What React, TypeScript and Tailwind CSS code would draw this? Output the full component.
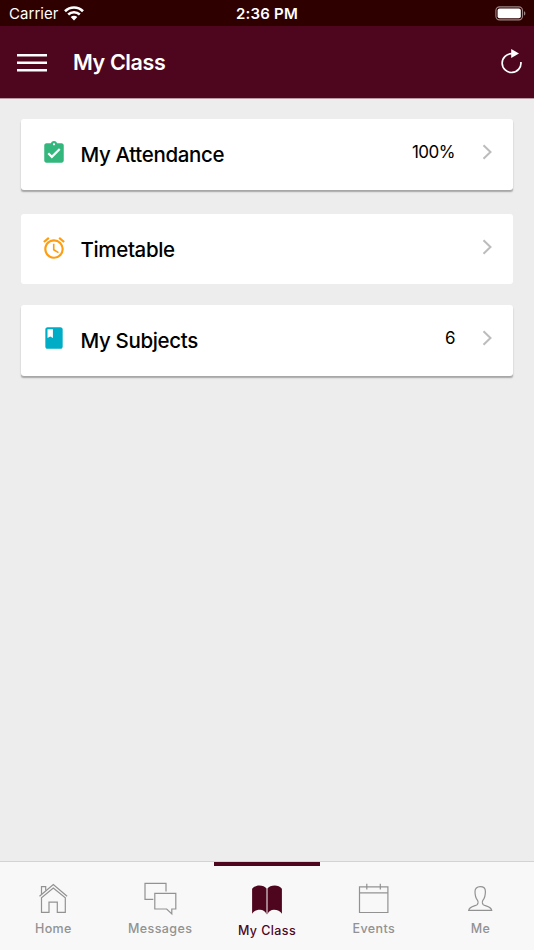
import React from 'react';
import { MdAssignmentTurnedIn, MdAccessAlarm, MdClass } from 'react-icons/md';

const cards = [
  {
    title: 'My Attendance',
    value: '100%',
    icon: <MdAssignmentTurnedIn size={26} className="mb-[3px] text-[#34b77c]" />,
    className: 'mt-[20px] h-[71px] shadow-[0_2px_1.5px_-0.5px_rgba(0,0,0,0.3)]',
  },
  {
    title: 'Timetable',
    value: '',
    icon: <MdAccessAlarm size={26} className="mb-[3px] text-[#ff9c0f]" />,
    className: 'mt-[24px] h-[70px] pt-px',
  },
  {
    title: 'My Subjects',
    value: '6',
    icon: <MdClass size={26} className="mb-[5px] text-[#00adc6]" />,
    className: 'mt-[21px] h-[71px] shadow-[0_2px_1.5px_-0.5px_rgba(0,0,0,0.3)]',
  },
];

const tabs = [
  { label: 'Home', icon: <HomeIcon />, active: false },
  { label: 'Messages', icon: <MessagesIcon />, active: false },
  { label: 'My Class', icon: <BookIcon />, active: true },
  { label: 'Events', icon: <CalendarIcon />, active: false },
  { label: 'Me', icon: <PersonIcon />, active: false },
];

function HomeIcon() {
  return (
    <svg width="36" height="36" viewBox="0 0 36 36" fill="none" stroke="currentColor" strokeWidth="1.2">
      <path d="M4.5 16.3 18.3 4.6l13.8 11.7" />
      <path d="M6.5 17.7v14.600H14V22.200h8.300v10.100h8V17.700l-12-9.700-11.800 9.700z" />
      <path d="M6.500 14.200V6.600h4.200v4" />
    </svg>
  );
}

function MessagesIcon() {
  return (
    <svg width="36" height="36" viewBox="0 0 36 36" fill="none" stroke="currentColor" strokeWidth="1.2">
      <path d="M11.300 19.300H3V3.400h21v8.200" />
      <path d="M12.800 13.300h21V29h-4v4.900L24.700 29H12.800V13.300z" />
    </svg>
  );
}

function BookIcon() {
  return (
    <svg width="36" height="36" viewBox="0 0 36 36" fill="currentColor">
      <path d="M3.100 8.800C5 6.600 7.400 5.500 10.300 5.500c3.200 0 5.800 1 7.200 2.900v26c-1.100-3.200-3.400-4.700-6.500-4.700-3.400 0-6.300 1.400-7.900 4V8.800z" />
      <path d="M32.900 8.800c-1.900-2.200-4.300-3.300-7.200-3.300-3.200 0-5.800 1-7.200 2.900v26c1.100-3.200 3.400-4.700 6.500-4.700 3.400 0 6.300 1.400 7.900 4V8.800z" />
    </svg>
  );
}

function CalendarIcon() {
  return (
    <svg width="36" height="36" viewBox="0 0 36 36" fill="none" stroke="currentColor" strokeWidth="1.2">
      <path d="M3.500 6.900h28.400v25.600H3.500z" />
      <path d="M3.500 12.900h28.400M10.800 3.800v5.800M24.300 3.800v5.800" />
    </svg>
  );
}

function PersonIcon() {
  return (
    <svg width="36" height="36" viewBox="0 0 36 36" fill="none" stroke="currentColor" strokeWidth="1.2">
      <path d="M17.200 6.600c-3.300 0-5.200 2-5.200 4.800 0 4 .7 6.600 2.400 8.700.9 1.100.8 3.400-.2 4.500-1.700 1.700-7.500 1.200-8.500 5.700h23c-1-4.500-6.800-4-8.500-5.700-1-1.100-1.100-3.400-.2-4.500 1.700-2.100 2.400-4.700 2.400-8.700 0-2.800-1.900-4.800-5.200-4.800z" />
    </svg>
  );
}

function WifiIcon() {
  return (
    <svg width="20" height="15" viewBox="0 0 20 15" fill="none" stroke="#fff" strokeWidth="2.6">
      <path d="M1 5.200c5.100-5 12.900-5 18 0" />
      <path d="M4.200 8.500c3.300-3.100 8.300-3.100 11.600 0" />
      <path d="M10 14.500 6.700 11.100c1.900-1.700 4.700-1.700 6.600 0z" fill="#fff" stroke="none" />
    </svg>
  );
}

function BatteryIcon() {
  return (
    <svg width="32" height="15" viewBox="0 0 32 15">
      <rect x="0.9" y="0.9" width="26.6" height="13" rx="3.6" fill="none" stroke="#9c8585" strokeWidth="1.1" />
      <rect x="2.6" y="2.6" width="23.2" height="9.6" rx="2" fill="#fff" />
      <path d="M29 5.200c1.800.6 1.800 3.800 0 4.400z" fill="#9c8585" />
    </svg>
  );
}

function StatusBar() {
  return (
    <div className="grid h-[26px] grid-cols-3 items-center bg-[#2e0000] text-white">
      <div className="flex items-center gap-[5px] pl-[9px]">
        <span className="pt-[3px] text-[15px] tracking-[0.05px]">Carrier</span>
        <WifiIcon />
      </div>
      <div className="pt-[3px] text-center text-[15px] font-semibold tracking-[0.2px]">2:36 PM</div>
      <div className="flex justify-end pr-[7px]">
        <BatteryIcon />
      </div>
    </div>
  );
}

function Header() {
  return (
    <header className="flex h-[73px] items-center border-b border-[#b79aa5] bg-[#4e051e] pl-[17px] pr-[11px] text-white">
      <svg width="30" height="20" viewBox="0 0 30 20" stroke="#fff" strokeWidth="2.4">
        <path d="M0 3.200h30M0 10.700h30M0 18.200h30" />
      </svg>
      <h1 className="ml-[26px] flex-1 text-[21.5px] font-semibold tracking-[-0.4px]">My Class</h1>
      <svg width="23" height="26" viewBox="0 0 23 26" fill="none">
        <path d="M12 4.700A9.400 9.400 0 1 0 20.900 13" stroke="#fff" strokeWidth="1.7" />
        <path d="M11.200 0v9l7.800-4.500z" fill="#fff" />
      </svg>
    </header>
  );
}

export default function App() {
  return (
    <div className="flex h-[950px] w-[534px] flex-col overflow-hidden bg-[#ededed] font-['Inter','Liberation_Sans',sans-serif] [font-variant-ligatures:none]">
      <StatusBar />
      <Header />
      <main className="flex-1 px-[21px]">
        {cards.map((card) => (
          <div key={card.title} className={`flex items-center rounded-[3px] bg-white px-[20px] ${card.className}`}>
            {card.icon}
            <span className="ml-[13.5px] flex-1 text-[20.5px] leading-[30px] font-medium tracking-[-0.35px] text-black">
              {card.title}
            </span>
            <span className="mb-[4px] text-[17px] tracking-[-0.5px] text-black">{card.value}</span>
            <svg className="mb-[6px] ml-[27px]" width="11" height="16" viewBox="0 0 11 16" fill="none">
              <path d="M1.500 1.200 8.500 8l-7 6.800" stroke="#bcbcbc" strokeWidth="2" />
            </svg>
          </div>
        ))}
      </main>
      <nav className="grid h-[89px] grid-cols-5 border-t border-[#d3d3d3] bg-[#f8f8f8]">
        {tabs.map((tab) => (
          <div
            key={tab.label}
            className={`flex flex-col items-center border-t-4 pt-[14px] ${tab.active ? 'border-[#4e051e] text-[#4e051e]' : 'border-transparent text-[#929292]'}`}
          >
            {tab.icon}
            <span className={`text-[12.5px] leading-[18px] font-medium tracking-[0.4px] ${tab.active ? 'mt-[5.5px]' : 'mt-[3.5px]'}`}>
              {tab.label}
            </span>
          </div>
        ))}
      </nav>
    </div>
  );
}
